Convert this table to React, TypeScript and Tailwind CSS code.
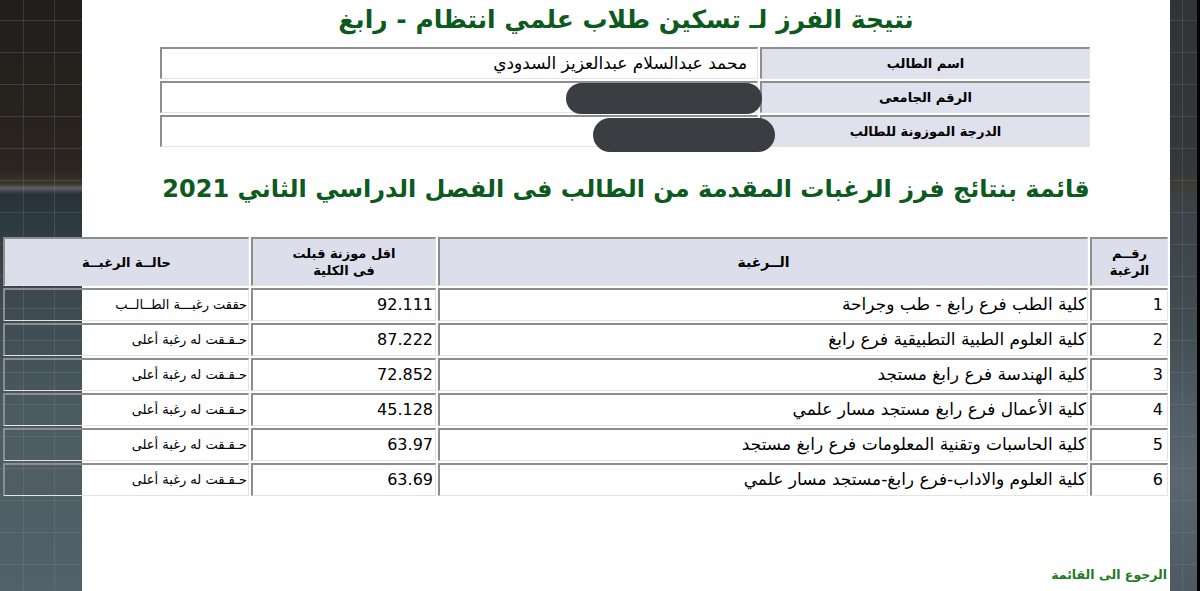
import React from 'react';

const rows = [
  { n: '1', name: 'كلية الطب فرع رابغ - طب وجراحة', score: '92.111', status: 'حققت رغبـــة الطــالــب' },
  { n: '2', name: 'كلية العلوم الطبية التطبيقية فرع رابغ', score: '87.222', status: 'حـقـقت له رغبة أعلى' },
  { n: '3', name: 'كلية الهندسة فرع رابغ مستجد', score: '72.852', status: 'حـقـقت له رغبة أعلى' },
  { n: '4', name: 'كلية الأعمال فرع رابغ مستجد مسار علمي', score: '45.128', status: 'حـقـقت له رغبة أعلى' },
  { n: '5', name: 'كلية الحاسبات وتقنية المعلومات فرع رابغ مستجد', score: '63.97', status: 'حـقـقت له رغبة أعلى' },
  { n: '6', name: 'كلية العلوم والاداب-فرع رابغ-مستجد مسار علمي', score: '63.69', status: 'حـقـقت له رغبة أعلى' },
];

const info = [
  { label: 'اسم الطالب', value: 'محمد عبدالسلام عبدالعزيز السدودي' },
  { label: 'الرقم الجامعى', value: '' },
  { label: 'الدرجة الموزونة للطالب', value: '' },
];

// inset look of the old html tables
const cell = 'border-t-2 border-l-2 border-b border-r border-t-[#8d8d8d] border-l-[#8d8d8d] border-b-[#e4e4e4] border-r-[#e4e4e4]';

export default function App() {
  return (
    <div className="flex h-[591px] w-full overflow-hidden bg-white font-['DejaVu_Sans',sans-serif] text-black">
      {/* Left backdrop */}
      <aside className="w-[82px] shrink-0 bg-[linear-gradient(to_bottom,#211e1b_0px,#2a2520_170px,#3b352c_184px,#5b6266_188px,#27323a_194px,#36434a_260px,#4d5b62_420px,#52616a_591px)]">
        <div className="h-full bg-[linear-gradient(to_right,rgba(140,150,155,0.22)_1px,transparent_1px),linear-gradient(to_bottom,rgba(140,150,155,0.22)_1px,transparent_1px)] [background-size:31px_32px] [background-position:23px_20px]" />
      </aside>

      {/* Page */}
      <main dir="rtl" className="flex min-w-0 flex-1 flex-col">
        <h1 className="pt-[2px] text-center text-[25px] leading-[36px] font-bold text-[#0c5a1d]">
          نتيجة الفرز لـ تسكين طلاب علمي انتظام - رابغ
        </h1>

        <div className="relative mt-[7px] mr-[78px] w-[934px]">
          <table className="w-full border-separate border-spacing-[2px]">
            <tbody>
              {info.map((r) => (
                <tr key={r.label}>
                  <td className={`${cell} h-[32px] w-[330px] bg-[#dfe1ec] text-center text-[13px] font-bold`}>{r.label}</td>
                  <td className={`${cell} h-[32px] pr-[10px] text-right text-[17px]`}>{r.value}</td>
                </tr>
              ))}
            </tbody>
          </table>
          {/* redaction marks */}
          <div className="absolute left-[408px] top-[38px] h-[31px] w-[196px] rounded-full bg-[#3a3d41]" />
          <div className="absolute left-[435px] top-[73px] h-[34px] w-[182px] rounded-full bg-[#3a3d41]" />
        </div>

        <h2 className="mt-[20px] text-center text-[24px] leading-[40px] font-bold text-[#0c5a1d]">
          قائمة بنتائج فرز الرغبات المقدمة من الطالب فى الفصل الدراسي الثاني 2021
        </h2>

        <table className="mt-[26px] w-[1169px] border-separate border-spacing-[2px]">
          <thead>
            <tr className="bg-[#dcdfeb] text-[13px] font-bold leading-[17px]">
              <th className={`${cell} h-[49px] w-[78px]`}>
                رقــم
                <br />
                الرغبة
              </th>
              <th className={`${cell} h-[49px] text-[14px]`}>الــرغبة</th>
              <th className={`${cell} h-[49px] w-[185px]`}>
                اقل موزنة قبلت
                <br />
                فى الكلية
              </th>
              <th className={`${cell} h-[49px] w-[246px]`}>حالــة الرغبــة</th>
            </tr>
          </thead>
          <tbody>
            {rows.map((r) => (
              <tr key={r.n}>
                <td className={`${cell} h-[33px] pr-[4px] text-right text-[16px]`}>{r.n}</td>
                <td className={`${cell} h-[33px] pr-[1px] text-right text-[17px]`}>{r.name}</td>
                <td className={`${cell} h-[33px] pr-[2px] text-right text-[16px]`}>{r.score}</td>
                <td className={`${cell} h-[33px] pr-[1px] text-right text-[13px]`}>{r.status}</td>
              </tr>
            ))}
          </tbody>
        </table>

        <div className="mt-auto mb-[5px] pr-[3px] text-right">
          <a className="text-[12.5px] font-bold text-[#1f7a1f]">الرجوع الى القائمة</a>
        </div>
      </main>

      {/* Right backdrop */}
      <aside className="w-[30px] shrink-0 border-r-[3px] border-r-black bg-[linear-gradient(to_bottom,#2f3436_0px,#33383a_170px,#3d3c33_182px,#3b4246_200px,#414c52_330px,#4f5c63_400px,#59666d_480px,#4d5a62_591px)]">
        <div className="h-full bg-[linear-gradient(to_right,rgba(140,150,155,0.2)_1px,transparent_1px),linear-gradient(to_bottom,rgba(140,150,155,0.2)_1px,transparent_1px)] [background-size:20px_32px] [background-position:12px_20px]" />
      </aside>
    </div>
  );
}
